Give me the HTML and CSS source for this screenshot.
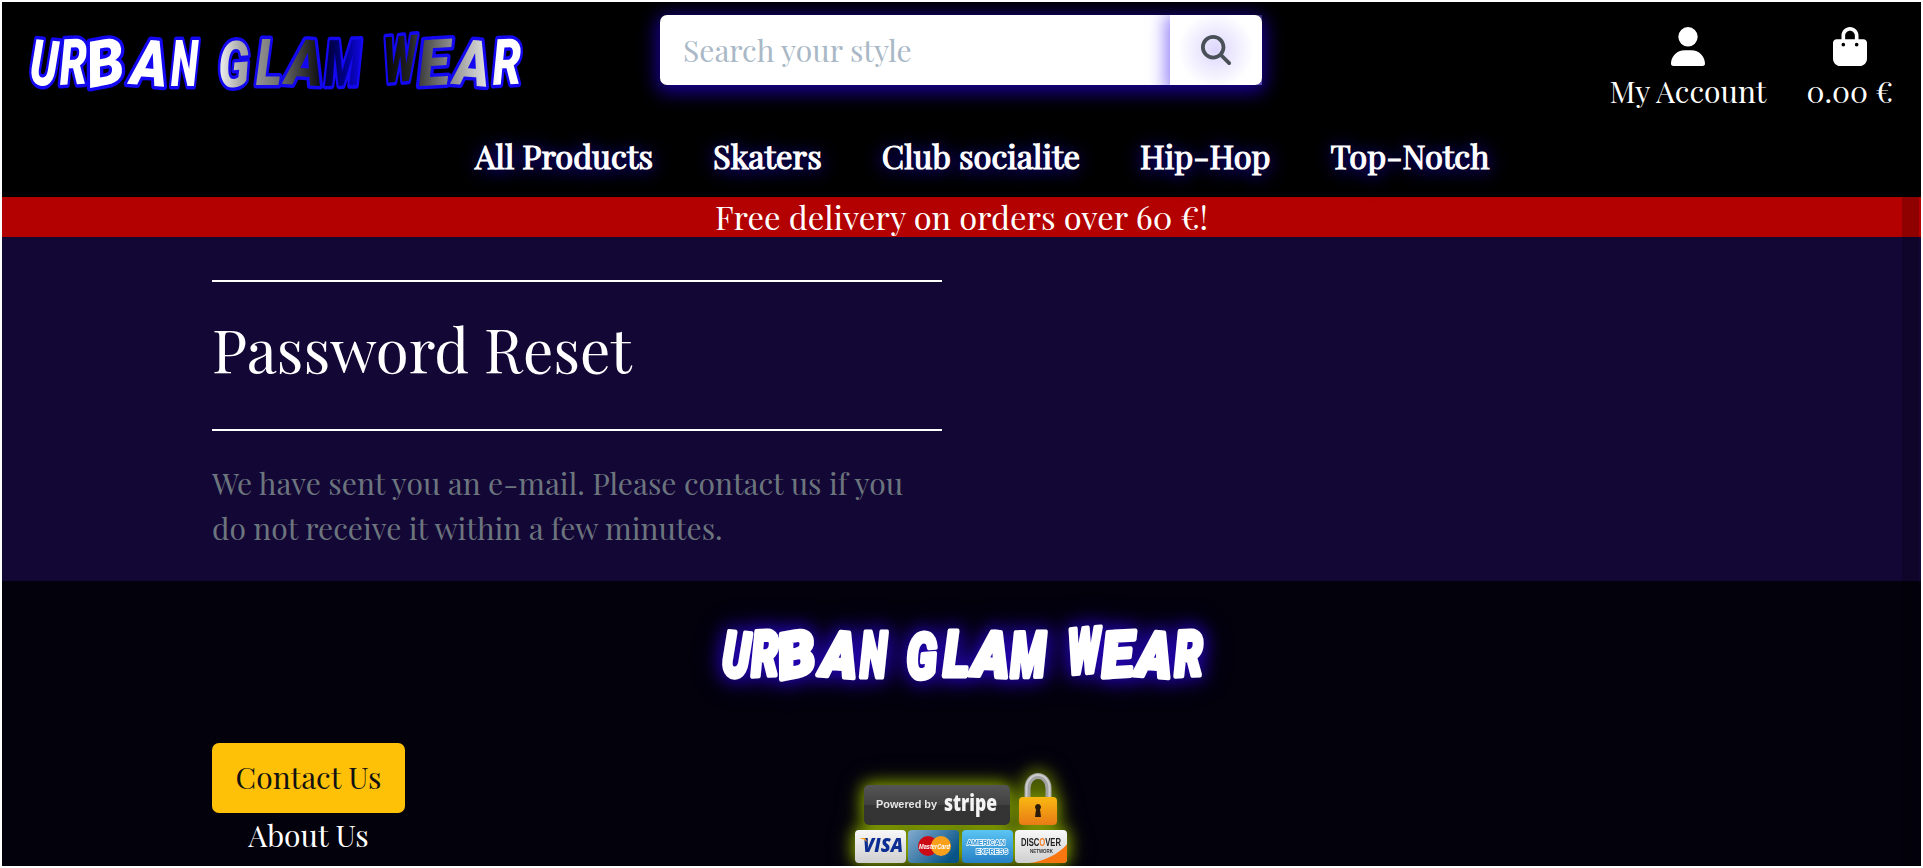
FILE: index.html
```html
<!DOCTYPE html>
<html lang="en">
<head>
<meta charset="utf-8">
<title>Urban Glam Wear - Password Reset</title>
<link rel="stylesheet" href="styles.css">
</head>
<body>
<div class="page">
  <header class="header">
    <div class="topbar">
      <a class="logo">
        <svg width="530" height="100" viewBox="0 0 530 100">
          <defs>
            <linearGradient id="metal" gradientUnits="userSpaceOnUse" x1="0" y1="0" x2="500" y2="0">
              <stop offset="0.43" stop-color="#fff"/>
              <stop offset="0.48" stop-color="#aaa"/>
              <stop offset="0.55" stop-color="#777"/>
              <stop offset="0.63" stop-color="#1a1a1a"/>
              <stop offset="0.65" stop-color="#000030"/>
              <stop offset="0.69" stop-color="#000088"/>
              <stop offset="0.73" stop-color="#1408f0"/>
              <stop offset="0.76" stop-color="#000"/>
              <stop offset="0.82" stop-color="#222"/>
              <stop offset="0.87" stop-color="#666"/>
              <stop offset="0.94" stop-color="#bbb"/>
              <stop offset="1" stop-color="#fff"/>
            </linearGradient>
          </defs>
          <text class="graffiti graffiti-metal"><tspan x="29" y="84" textLength="28" lengthAdjust="spacingAndGlyphs" rotate="4">U</tspan><tspan x="60" y="85" textLength="28" lengthAdjust="spacingAndGlyphs" rotate="-2">R</tspan><tspan x="90" y="88" textLength="38" lengthAdjust="spacingAndGlyphs" rotate="-10">B</tspan><tspan x="130" y="84" textLength="37" lengthAdjust="spacingAndGlyphs" rotate="4">A</tspan><tspan x="171" y="86" textLength="27" lengthAdjust="spacingAndGlyphs" rotate="0">N</tspan> <tspan x="219" y="88" textLength="31" lengthAdjust="spacingAndGlyphs" rotate="-3">G</tspan><tspan x="256" y="85" textLength="26" lengthAdjust="spacingAndGlyphs" rotate="0">L</tspan><tspan x="285" y="84" textLength="38" lengthAdjust="spacingAndGlyphs" rotate="3">A</tspan><tspan x="325" y="86" textLength="36" lengthAdjust="spacingAndGlyphs" rotate="-1">M</tspan> <tspan x="384" y="83" textLength="33" lengthAdjust="spacingAndGlyphs" rotate="-3">W</tspan><tspan x="419" y="86" textLength="32" lengthAdjust="spacingAndGlyphs" rotate="-3">E</tspan><tspan x="453" y="84" textLength="36" lengthAdjust="spacingAndGlyphs" rotate="4">A</tspan><tspan x="493" y="85" textLength="29" lengthAdjust="spacingAndGlyphs" rotate="-2">R</tspan></text>
        </svg>
      </a>
      <form class="search">
        <input class="search-input" type="text" placeholder="Search your style">
        <button class="search-button" type="button" aria-label="Search">
          <svg width="30" height="30" viewBox="0 0 512 512"><path fill="#495057" d="M416 208c0 45.900-14.900 88.300-40 122.700L502.600 457.400c12.500 12.500 12.500 32.800 0 45.300s-32.800 12.500-45.300 0L330.700 376c-34.400 25.200-76.800 40-122.700 40C93.100 416 0 322.900 0 208S93.100 0 208 0S416 93.100 416 208zM208 352a144 144 0 1 0 0-288 144 144 0 1 0 0 288z"/></svg>
        </button>
      </form>
      <div class="actions">
        <a class="action account">
          <svg width="34" height="39" viewBox="0 0 448 512"><path fill="#fff" d="M224 256A128 128 0 1 0 224 0a128 128 0 1 0 0 256zm-45.700 48C79.800 304 0 383.800 0 482.300C0 498.700 13.300 512 29.700 512H418.300c16.400 0 29.700-13.300 29.700-29.700C448 383.800 368.200 304 269.700 304H178.300z"/></svg>
          <span>My Account</span>
        </a>
        <a class="action bag">
          <svg width="34" height="39" viewBox="0 0 448 512"><path fill="#fff" d="M160 112c0-35.300 28.700-64 64-64s64 28.700 64 64v48H160V112zm-48 48H48c-26.500 0-48 21.500-48 48V416c0 53 43 96 96 96H352c53 0 96-43 96-96V208c0-26.500-21.500-48-48-48H336V112C336 50.100 285.900 0 224 0S112 50.100 112 112v48zm24 48a24 24 0 1 1 0 48 24 24 0 1 1 0-48zm152 24a24 24 0 1 1 48 0 24 24 0 1 1 -48 0z"/></svg>
          <span>0.00 €</span>
        </a>
      </div>
    </div>
    <nav class="nav">
      <a>All Products</a>
      <a>Skaters</a>
      <a>Club socialite</a>
      <a>Hip-Hop</a>
      <a>Top-Notch</a>
    </nav>
  </header>
  <div class="banner">Free delivery on orders over 60 €!</div>
  <main class="main">
    <hr class="rule">
    <h1 class="title">Password Reset</h1>
    <hr class="rule">
    <p class="message">We have sent you an e-mail. Please contact us if you do not receive it within a few minutes.</p>
  </main>
  <footer class="footer">
    <div class="footer-logo">
      <svg width="518" height="98" viewBox="10 0 530 100">
        <text class="graffiti graffiti-glow"><tspan x="29" y="84" textLength="28" lengthAdjust="spacingAndGlyphs" rotate="4">U</tspan><tspan x="60" y="85" textLength="28" lengthAdjust="spacingAndGlyphs" rotate="-2">R</tspan><tspan x="90" y="88" textLength="38" lengthAdjust="spacingAndGlyphs" rotate="-10">B</tspan><tspan x="130" y="84" textLength="37" lengthAdjust="spacingAndGlyphs" rotate="4">A</tspan><tspan x="171" y="86" textLength="27" lengthAdjust="spacingAndGlyphs" rotate="0">N</tspan> <tspan x="219" y="88" textLength="31" lengthAdjust="spacingAndGlyphs" rotate="-3">G</tspan><tspan x="256" y="85" textLength="26" lengthAdjust="spacingAndGlyphs" rotate="0">L</tspan><tspan x="285" y="84" textLength="38" lengthAdjust="spacingAndGlyphs" rotate="3">A</tspan><tspan x="325" y="86" textLength="36" lengthAdjust="spacingAndGlyphs" rotate="-1">M</tspan> <tspan x="384" y="83" textLength="33" lengthAdjust="spacingAndGlyphs" rotate="-3">W</tspan><tspan x="419" y="86" textLength="32" lengthAdjust="spacingAndGlyphs" rotate="-3">E</tspan><tspan x="453" y="84" textLength="36" lengthAdjust="spacingAndGlyphs" rotate="4">A</tspan><tspan x="493" y="85" textLength="29" lengthAdjust="spacingAndGlyphs" rotate="-2">R</tspan></text>
      </svg>
    </div>
    <div class="footer-row">
      <div class="links">
        <a class="contact">Contact Us</a>
        <a class="about">About Us</a>
      </div>
      <svg class="stripe" width="216" height="94" viewBox="0 0 216 94">
        <defs>
          <linearGradient id="dark" x2="0" y2="1"><stop offset="0" stop-color="#555"/><stop offset=".5" stop-color="#414141"/><stop offset=".51" stop-color="#343434"/><stop offset="1" stop-color="#333"/></linearGradient>
          <linearGradient id="gold" x2="0" y2="1"><stop offset="0" stop-color="#f9b812"/><stop offset="1" stop-color="#e87b16"/></linearGradient>
          <linearGradient id="silver" x2="0" y2="1"><stop offset="0" stop-color="#f8f8f8"/><stop offset="1" stop-color="#cfcfcf"/></linearGradient>
          <linearGradient id="steel" x2="1" y2="0.6"><stop offset="0" stop-color="#83acd0"/><stop offset="1" stop-color="#075386"/></linearGradient>
          <linearGradient id="sky" x2="0" y2="1"><stop offset="0" stop-color="#5bc5f3"/><stop offset="1" stop-color="#257fc5"/></linearGradient>
          <clipPath id="card"><rect x="162" y="61" width="52" height="33" rx="4"/></clipPath>
        </defs>
        <rect x="11" y="16" width="146" height="40" rx="5" fill="url(#dark)"/>
        <text class="powered" x="23" y="39" textLength="61" lengthAdjust="spacingAndGlyphs">Powered by</text>
        <text class="stripe-word" x="91" y="42" textLength="53" lengthAdjust="spacingAndGlyphs">stripe</text>
        <path d="M175 29V19a10.500 12 0 0 1 21 0V29" transform="translate(-.5 0)" fill="none" stroke="#a2a2a2" stroke-width="6"/>
        <path d="M174 29V19a11.500 13 0 0 1 23 0V29" transform="translate(-.5 0)" fill="none" stroke="#ccc" stroke-width="2"/>
        <rect x="166" y="28" width="38" height="28" rx="4" fill="url(#gold)"/>
        <path d="M185 35a3.200 3.200 0 0 0-2 5.500L182 48h6l-1-7.500a3.200 3.200 0 0 0-2-5.500z" fill="#2b1a08"/>
        <rect x="2" y="61" width="51" height="33" rx="4" fill="url(#silver)"/>
        <text class="visa" x="10" y="83" textLength="40" lengthAdjust="spacingAndGlyphs">VISA</text>
        <path d="M6 69h6l4 7c-2-4-5-6-10-7z" fill="#f6a01a"/>
        <rect x="55" y="61" width="51" height="33" rx="4" fill="url(#steel)"/>
        <circle cx="75" cy="77" r="10" fill="#cc0a14"/>
        <circle cx="88" cy="77" r="10" fill="#f9a01b"/>
        <text class="mastercard" x="66" y="80" textLength="31" lengthAdjust="spacingAndGlyphs">MasterCard</text>
        <rect x="109" y="61" width="51" height="33" rx="4" fill="url(#sky)"/>
        <text class="amex" x="114" y="76" textLength="38" lengthAdjust="spacingAndGlyphs">AMERICAN</text>
        <text class="amex" x="123" y="84.500" textLength="32" lengthAdjust="spacingAndGlyphs">EXPRESS</text>
        <rect x="162" y="61" width="52" height="33" rx="4" fill="url(#silver)"/>
        <path clip-path="url(#card)" d="M176 94c16-2 30-9 39-20v20z" fill="#f8760f"/>
        <text class="discover" x="168" y="77" textLength="40" lengthAdjust="spacingAndGlyphs">DISC<tspan fill="#f47b20">O</tspan>VER</text>
        <text class="network" x="177" y="84" textLength="23" lengthAdjust="spacingAndGlyphs">NETWORK</text>
      </svg>
    </div>
  </footer>
  <div class="scroll-track"></div>
</div>
</body>
</html>
```
FILE: styles.css
```css
* { box-sizing: border-box; }
body {
  margin: 0;
  background: #fff;
  font-family: "Playfair Display", "Liberation Serif", serif;
  font-size: 30px;
  color: #fff;
  overflow: hidden;
}
.page {
  position: relative;
  height: 868px;
  border: 2px solid #fff;
  overflow: hidden;
}
.header { height: 195px; background: #000; }
.topbar {
  display: grid;
  grid-template-columns: 658px 602px 1fr;
  height: 132px;
}
.logo svg { display: block; margin: -2px 0 0 -2px; overflow: visible; }
.graffiti {
  font: italic 900 64px Roboto, sans-serif;
  stroke-linejoin: round;
  paint-order: stroke;
}
.graffiti-metal { fill: url(#metal); stroke: #1408f0; stroke-width: 7px; }
.footer-logo svg { overflow: visible; }
.graffiti-glow {
  fill: #fff;
  stroke: #fff;
  stroke-width: 5px;
  filter: drop-shadow(0 0 9px #2404b8) drop-shadow(0 0 10px #140366);
}
.search {
  display: flex;
  height: 70px;
  margin-top: 13px;
  border-radius: 7px;
  box-shadow: 0 4px 18px 4px #16008c;
}
.search-input {
  width: 510px;
  padding: 0 23px;
  border: 0;
  border-radius: 7px 0 0 7px;
  background: #fff;
  font: 30px "Playfair Display", "Liberation Serif", serif;
}
.search-input::placeholder { color: #a9b8c6; opacity: 1; }
.search-button {
  display: flex;
  align-items: center;
  justify-content: center;
  width: 92px;
  padding: 0;
  border: 0;
  border-radius: 0 7px 7px 0;
  background: radial-gradient(circle, #ddd6fd 0, #fff 38px);
  box-shadow: 0 4px 18px 4px #8f7cf8;
  clip-path: inset(0 0 0 -30px);
}
.actions {
  display: flex;
  justify-content: flex-end;
  gap: 40px;
  padding: 25px 28px 0 0;
}
.action {
  display: flex;
  flex-direction: column;
  align-items: center;
  gap: 3px;
  line-height: 45px;
  white-space: nowrap;
}
.action svg { display: block; }
.nav {
  display: flex;
  gap: 60px;
  padding-left: 473px;
  font-size: 32.64px;
  -webkit-text-stroke: 1.2px #fff;
  line-height: 43px;
  white-space: nowrap;
  text-shadow: 0 2px 16px #2b08c8, 0 2px 24px #1a0480;
}
.banner {
  height: 40px;
  background: #b30000;
  font-size: 32.7px;
  line-height: 40px;
  text-align: center;
}
.main {
  height: 344px;
  padding: 43px 0 0 210px;
  background: #130736;
}
.rule { width: 730px; height: 2px; margin: 0; border: 0; background: #fff; }
.title {
  margin: 29px 0 44px;
  font-size: 60px;
  font-weight: normal;
  line-height: 74px;
}
.message {
  width: 730px;
  margin: 30px 0 0;
  line-height: 45px;
  color: #6c757d;
}
.footer { height: 285px; background: #03010c; overflow: hidden; }
.footer-logo { display: flex; justify-content: center; height: 162px; padding-top: 12px; }
.footer-row { display: flex; padding-left: 210px; }
.links { width: 193px; text-align: center; }
.contact {
  display: block;
  height: 70px;
  border-radius: 7px;
  background: #ffc107;
  color: #111;
  line-height: 68px;
}
.about { display: block; line-height: 45px; }
.stripe {
  margin: 26px 0 0 448px;
  overflow: visible;
  filter: drop-shadow(0 0 8px #8aa800) drop-shadow(0 0 9px #3c4800);
}
.powered { font: bold 11px "Liberation Sans", sans-serif; fill: #e6e6e6; }
.stripe-word { font: 800 22px "Open Sans", sans-serif; fill: #f4f4f4; }
.visa { font: italic 800 20px "Open Sans", sans-serif; fill: #0c2d91; }
.mastercard { font: italic bold 8px "Liberation Sans", sans-serif; fill: #fff; }
.amex { font: bold 7.500px "Liberation Sans", sans-serif; fill: #2b8fd0; stroke: #fff; stroke-width: 1.6px; paint-order: stroke; }
.discover { font: bold 10px "Liberation Sans", sans-serif; fill: #222; }
.network { font: bold 5px "Liberation Sans", sans-serif; fill: #333; }
.scroll-track {
  position: absolute;
  top: 195px;
  right: 2px;
  bottom: 0;
  width: 17px;
  background: rgba(0, 0, 0, 0.2);
}
```
